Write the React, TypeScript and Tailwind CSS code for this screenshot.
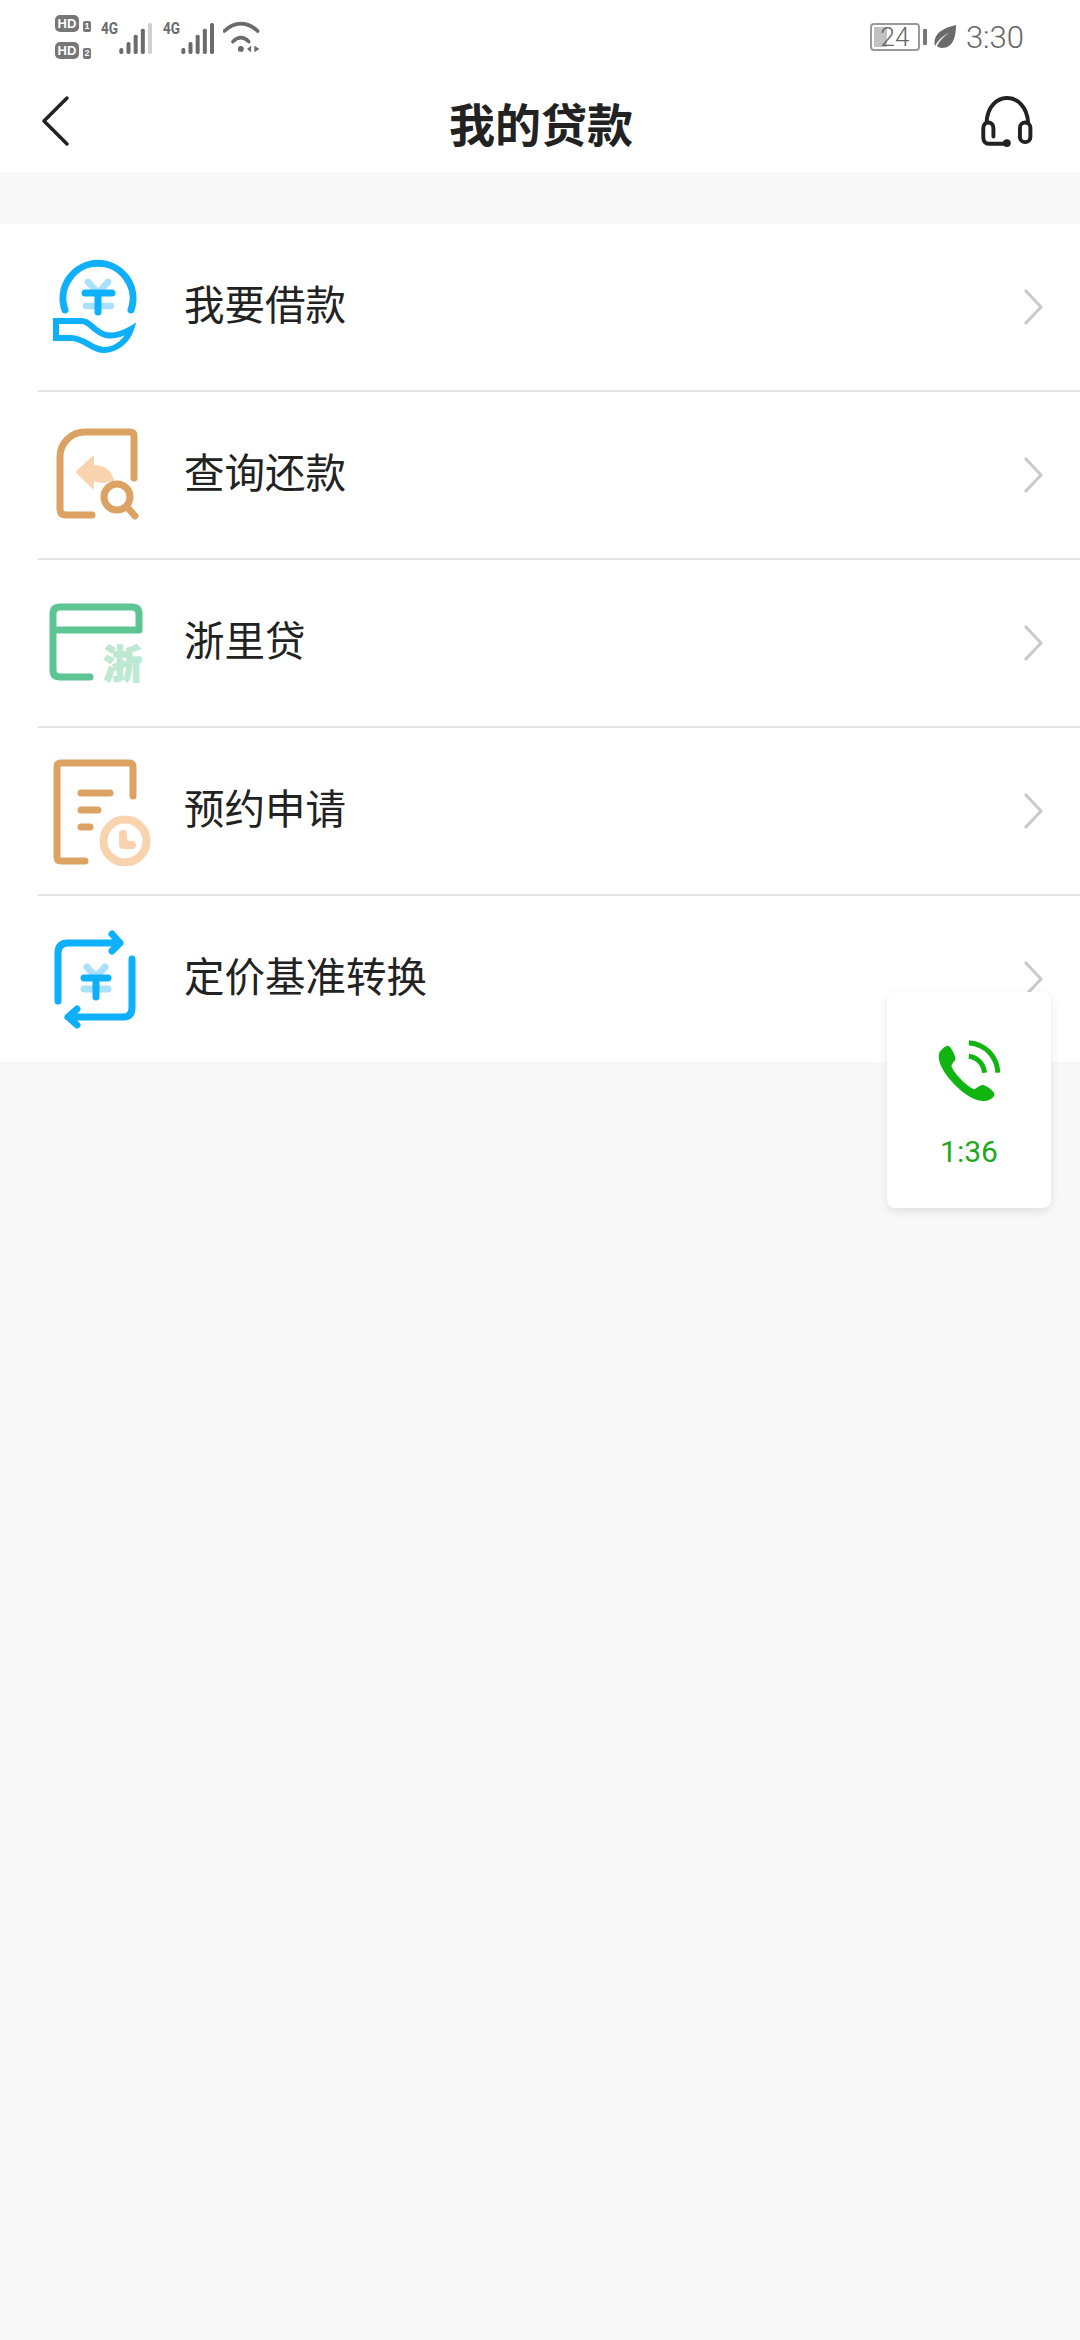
import React from 'react';

const CJK = 'font-["Noto_Sans_CJK_SC","Noto_Sans",sans-serif]';

const Blue = '#0fb0fb';
const BlueLight = '#a9e0fc';
const Tan = '#dca263';
const TanLight = '#f8d3ae';
const Green = '#5cc593';
const GreenLight = '#bde9d3';

const BorrowIcon = () => (
  <svg width="110" height="110" viewBox="0 0 110 110" fill="none" strokeLinecap="round" strokeLinejoin="round">
    <path d="M21 58 A35 35 0 1 1 87 58" stroke={Blue} strokeWidth="7" />
    <path d="M12 69 H38 C46 69 50 80 62 83 C71 85 80 81 87 77 C83 89 72 98 60 98 C47 98 41 86 27 86 H12 Z" stroke={Blue} strokeWidth="6" strokeLinecap="butt" strokeLinejoin="miter" />
    <path d="M44 30 L54 41 L64 30 M42 54 H67" stroke={BlueLight} strokeWidth="6.5" />
    <path d="M41 41 H68 M54 41 V60" stroke={Blue} strokeWidth="7" />
  </svg>
);

const RepayIcon = () => (
  <svg width="110" height="110" viewBox="0 0 110 110" fill="none" strokeLinecap="round" strokeLinejoin="round">
    <path d="M48 95 H22 Q16 95 16 89 V37 A25 25 0 0 1 41 12 H86 Q90 12 90 16 V58" stroke={Tan} strokeWidth="7" />
    <path d="M33 52 L49 37 V46 C58 46 66 50 69 60 L58 62 L49 60 V68 Z" fill={TanLight} stroke={TanLight} strokeWidth="2" />
    <circle cx="73" cy="77" r="13" stroke={Tan} strokeWidth="7" fill="#ffffff" />
    <path d="M83 87 L91 96" stroke={Tan} strokeWidth="7" />
  </svg>
);

const ZheIcon = () => (
  <svg width="110" height="110" viewBox="0 -1 110 110" fill="none" strokeLinecap="round" strokeLinejoin="round">
    <path d="M46 88 H16 Q9 88 9 81 V25 Q9 18 16 18 H88 Q95 18 95 25 V41 H9" stroke={Green} strokeWidth="7" />
    <text x="59" y="89" fontSize="39" fontWeight="900" fill={GreenLight} stroke={GreenLight} strokeWidth="1" fontFamily="'Noto Sans CJK SC', sans-serif">浙</text>
  </svg>
);

const ReserveIcon = () => (
  <svg width="110" height="110" viewBox="0 -2 110 110" fill="none" strokeLinecap="round" strokeLinejoin="round">
    <path d="M41 103 H17 Q13 103 13 99 V9 Q13 5 17 5 H85 Q89 5 89 9 V38" stroke={Tan} strokeWidth="7" />
    <path d="M37 35 H66 M37 52 H54 M37 69 H46" stroke={Tan} strokeWidth="7" />
    <circle cx="81" cy="83" r="21.5" stroke={TanLight} strokeWidth="8" fill="#ffffff" />
    <path d="M79 76 V87 H88" stroke={TanLight} strokeWidth="8" fill={TanLight} />
  </svg>
);

const ConvertIcon = () => (
  <svg width="110" height="110" viewBox="0 -1 110 110" fill="none" strokeLinecap="round" strokeLinejoin="round">
    <path d="M14 76 V28 Q14 18 24 18 H76 M68 9 L76 18 L68 26" stroke={Blue} strokeWidth="7" />
    <path d="M88 34 V83 Q88 92 79 92 H24 M33 84 L24 92 L33 100" stroke={Blue} strokeWidth="7" />
    <path d="M43 42 L52 52 L61 42 M40 64 H64" stroke={BlueLight} strokeWidth="7" />
    <path d="M40 53 H64 M52 53 V72" stroke={Blue} strokeWidth="7" />
  </svg>
);

const Chevron = () => (
  <svg width="20" height="38" viewBox="0 0 20 38" fill="none" className="shrink-0">
    <path d="M2 2 L18 19 L2 36" stroke="#c9c9c9" strokeWidth="3" />
  </svg>
);

const Signal = ({ lastDim }: { lastDim?: boolean }) => (
  <svg width="34" height="32" viewBox="0 0 102 96" fill="none">
    {[0, 1, 2, 3, 4].map((i) => (
      <rect
        key={i}
        x={1 + i * 21.5}
        y={[78, 60, 38, 20, 3][i]}
        width="12"
        height={[18, 36, 58, 76, 93][i]}
        rx="5"
        fill={lastDim && i === 4 ? '#cfcfcf' : '#6b6b6b'}
      />
    ))}
  </svg>
);

const HdBadge = ({ n }: { n: string }) => (
  <div className="flex items-end gap-[4px]">
    <span className='flex h-[17px] w-[24px] items-center justify-center rounded-[5px] bg-[#777777] font-["Liberation_Sans",sans-serif] text-[13px] font-bold leading-none text-white'>HD</span>
    <span className='flex h-[11px] w-[8px] items-center justify-center rounded-[2px] bg-[#777777] font-["Liberation_Sans",sans-serif] text-[9px] font-bold leading-none text-white'>{n}</span>
  </div>
);

const FourG = () => (
  <span className='mb-[17px] w-[18px] origin-left scale-x-[0.8] font-["Roboto",sans-serif] text-[17px] font-bold leading-none text-[#6b6b6b]'>4G</span>
);

const StatusBar = () => (
  <div className="flex h-[74px] items-center justify-between pl-[55px] pr-[56px]">
    <div className="flex items-center">
      <div className="flex flex-col gap-[10px]">
        <HdBadge n="1" />
        <HdBadge n="2" />
      </div>
      <div className="ml-[10px] flex items-end">
        <FourG />
        <Signal lastDim />
      </div>
      <div className="ml-[10px] flex items-end">
        <FourG />
        <Signal />
      </div>
      <svg width="37" height="32" viewBox="665 62 112 96" fill="none" className="ml-[8px]">
        <path d="M669 92 C700 62 738 62 770 92" stroke="#6b6b6b" strokeWidth="11" strokeLinecap="round" />
        <path d="M695 124 C710 108 728 108 743 124" stroke="#6b6b6b" strokeWidth="11" strokeLinecap="round" />
        <circle cx="719" cy="146" r="9" fill="#6b6b6b" />
        <path d="M750 136 L738 146 L750 156 Z M760 136 L775 146 L760 156 Z" fill="#6b6b6b" />
      </svg>
    </div>
    <div className='flex items-center font-["Roboto",sans-serif] text-[#666666]'>
      <div className="relative flex h-[28px] w-[50px] items-center justify-center overflow-hidden rounded-[4px] border-2 border-[#999999]">
        <div className="absolute inset-y-[2px] left-[2px] w-[13px] bg-[#c2c2c2]" />
        <span className="relative text-[26px] font-light leading-none">24</span>
      </div>
      <div className="ml-[3px] h-[16px] w-[4px] rounded-[1px] bg-[#777777]" />
      <svg width="23" height="25" viewBox="0 0 23 25" className="ml-[7px]">
        <path d="M22 0 C22 12 19 23 8 23 C6 23 4 22 3 21 C6 15 10 11 15 8 C10 10 5 14 1 21 C-2 10 8 3 22 0 Z" fill="#6b6b6b" />
      </svg>
      <span className="ml-[9px] text-[31px] font-light leading-none">3:30</span>
    </div>
  </div>
);

const Header = () => (
  <div className="flex h-[98px] items-center pb-[2px] pl-[40px] pr-[46px]">
    <svg width="54" height="54" viewBox="0 0 54 54" fill="none">
      <path d="M27 3 L4 26 L27 49" stroke="#222222" strokeWidth="3.5" strokeLinecap="round" strokeLinejoin="round" />
    </svg>
    <h1 className={`flex-1 pl-[8px] text-center text-[46px] font-bold leading-none text-[#222222] ${CJK}`}>我的贷款</h1>
    <svg width="54" height="53" viewBox="595 280 165 160" fill="none" stroke="#222222" strokeWidth="12" strokeLinecap="round">
      <path d="M615 360 C620 260 735 260 742 360" />
      <path d="M636 403 V378 C636 354 605 354 605 378 V405 C605 418 612 425 622 425 H677" />
      <rect x="717" y="360" width="32" height="60" rx="16" />
      <circle cx="677" cy="423" r="6" fill="#222222" />
    </svg>
  </div>
);

const rows = [
  { label: '我要借款', Icon: BorrowIcon },
  { label: '查询还款', Icon: RepayIcon },
  { label: '浙里贷', Icon: ZheIcon },
  { label: '预约申请', Icon: ReserveIcon },
  { label: '定价基准转换', Icon: ConvertIcon },
];

export default function App() {
  return (
    <div className="relative h-[2340px] w-[1080px] overflow-hidden bg-[#f8f8f8]">
      <div className="bg-white">
        <StatusBar />
        <Header />
      </div>

      <div className="mt-[52px] bg-white">
        {rows.map((row, i) => (
          <div key={row.label}>
            {i > 0 && <div className="ml-[38px] h-[2px] bg-[#e3e3e3]" />}
            <div className="flex h-[166px] items-center pl-[44px] pr-[37px]">
              <row.Icon />
              <span className={`ml-[30px] flex-1 pb-[8px] text-[40.5px] leading-none text-[#222222] ${CJK}`}>{row.label}</span>
              <Chevron />
            </div>
          </div>
        ))}
      </div>

      {/* floating call card */}
      <div className="absolute left-[887px] top-[992px] flex h-[216px] w-[164px] flex-col items-center rounded-[8px] bg-white pt-[47px] shadow-[0_3px_10px_rgba(0,0,0,0.1)]">
        <svg width="67" height="65" viewBox="230 290 200 195" fill="none">
          <path d="M240 330 C248 318 258 310 266 310 C274 312 286 335 288 348 C288 358 276 362 276 372 C280 388 318 430 342 440 C352 440 360 426 372 428 C384 432 402 445 405 455 C405 465 392 475 375 476 C340 478 300 445 270 410 C245 380 232 350 240 330 Z" fill="#10b510" />
          <path d="M328 301 C378 305 413 343 415 391" stroke="#10b510" strokeWidth="15" />
          <path d="M328 342 C354 345 372 364 375 391" stroke="#10b510" strokeWidth="15" />
        </svg>
        <span className='mt-[33px] font-["Roboto",sans-serif] text-[30px] leading-none text-[#1fa81f]'>1:36</span>
      </div>
    </div>
  );
}
